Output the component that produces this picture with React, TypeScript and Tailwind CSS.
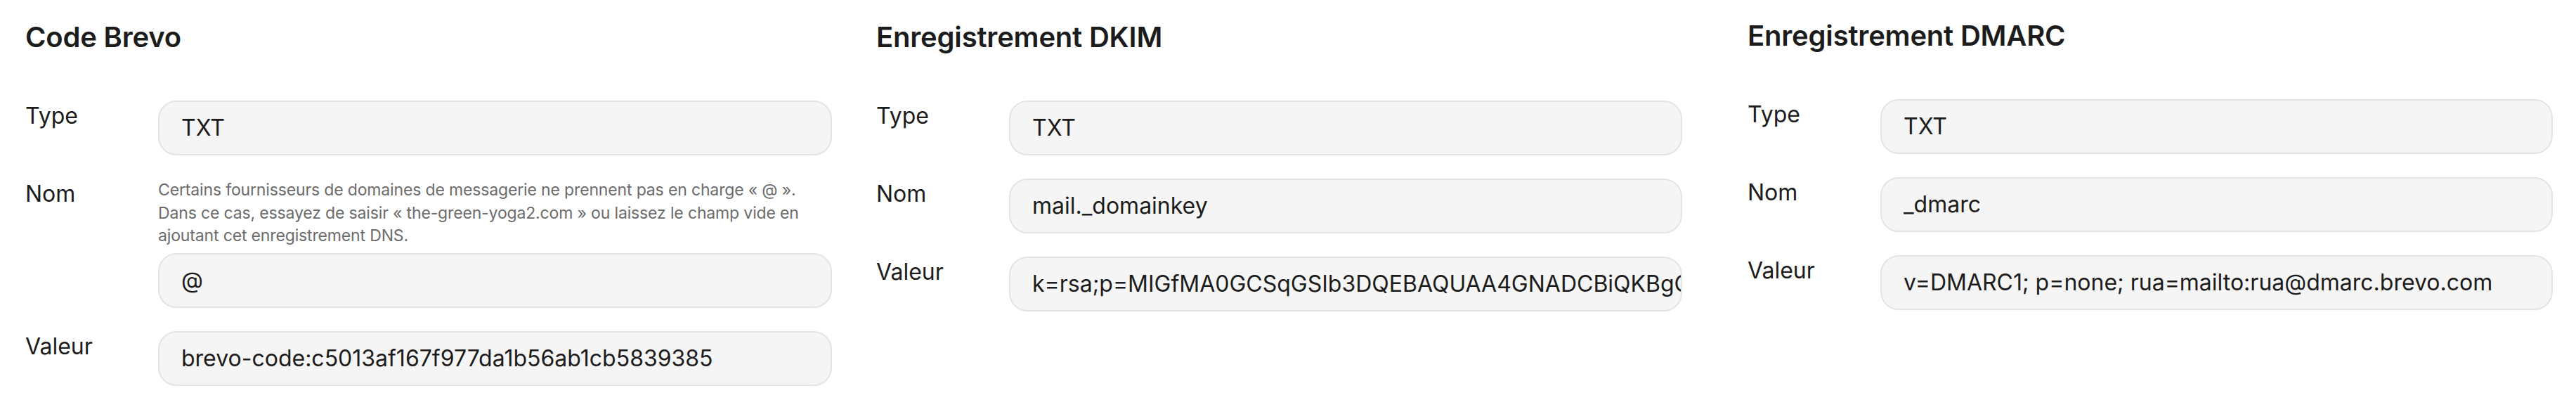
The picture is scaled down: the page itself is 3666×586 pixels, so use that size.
import React from 'react';

type Row = {
  label: string;
  value: string;
  hint?: string;
};

type Section = {
  title: string;
  rows: Row[];
  className: string;
};

const sections: Section[] = [
  {
    title: 'Code Brevo',
    className: 'w-[1148px] pt-[29px]',
    rows: [
      { label: 'Type', value: 'TXT' },
      {
        label: 'Nom',
        value: '@',
        hint: 'Certains fournisseurs de domaines de messagerie ne prennent pas en charge «\u00a0@\u00a0». Dans ce cas, essayez de saisir «\u00a0the-green-yoga2.com\u00a0» ou laissez le champ vide en ajoutant cet enregistrement DNS.',
      },
      { label: 'Valeur', value: 'brevo-code:c5013af167f977da1b56ab1cb5839385' },
    ],
  },
  {
    title: 'Enregistrement DKIM',
    className: 'w-[1147px] ml-[63px] pt-[29px]',
    rows: [
      { label: 'Type', value: 'TXT' },
      { label: 'Nom', value: 'mail._domainkey' },
      {
        label: 'Valeur',
        value:
          'k=rsa;p=MIGfMA0GCSqGSIb3DQEBAQUAA4GNADCBiQKBgQDeMVIzrCa3T14JsNY0IRv5/2V1/v2itlviLQBwXsa7shBD6TrBkswsFUToPyMRWC9tbR/5ey0nRBH0ZVxp+lsmTxid2Y2z+FApQ6ra2VsXfbJP3HE6wAO0YTVEJt1TmeczhEd2Jiz/fcabIISgXEdSpTYJhb0ct0VJRxcg4c8c7wIDAQAB',
      },
    ],
  },
  {
    title: 'Enregistrement DMARC',
    className: 'w-[1146px] ml-[93px] pt-[27px]',
    rows: [
      { label: 'Type', value: 'TXT' },
      { label: 'Nom', value: '_dmarc' },
      { label: 'Valeur', value: 'v=DMARC1; p=none; rua=mailto:rua@dmarc.brevo.com' },
    ],
  },
];

function Field({ value }: { value: string }) {
  return (
    <div className="h-[78px] flex items-center rounded-[26px] border-2 border-[#e4e4e4] bg-[#f5f5f5] pl-[31px] overflow-hidden whitespace-nowrap text-[32px] text-[#1c1c1c]">
      {value}
    </div>
  );
}

function RecordRow({ row }: { row: Row }) {
  return (
    <div className="flex items-start">
      <div className="w-[189px] shrink-0 text-[32px] leading-[44px] text-[#1c1c1c]">{row.label}</div>
      <div className="flex-1 min-w-0">
        {row.hint && (
          <p className="text-[23px] leading-[32.5px] tracking-[-0.15px] text-[#6b6b6b] mb-[8px]">{row.hint}</p>
        )}
        <Field value={row.value} />
      </div>
    </div>
  );
}

export default function App() {
  return (
    <div className="w-[3666px] h-[586px] bg-white flex pl-[36px] font-['Inter','Noto_Sans',sans-serif] antialiased">
      {sections.map(s => (
        <section key={s.title} className={s.className}>
          <h2 className="text-[40px] leading-[48px] font-semibold text-[#1c1c1c] tracking-[-0.2px]">{s.title}</h2>
          <div className="mt-[66px] flex flex-col gap-[33px]">
            {s.rows.map(r => (
              <RecordRow key={r.label} row={r} />
            ))}
          </div>
        </section>
      ))}
    </div>
  );
}
